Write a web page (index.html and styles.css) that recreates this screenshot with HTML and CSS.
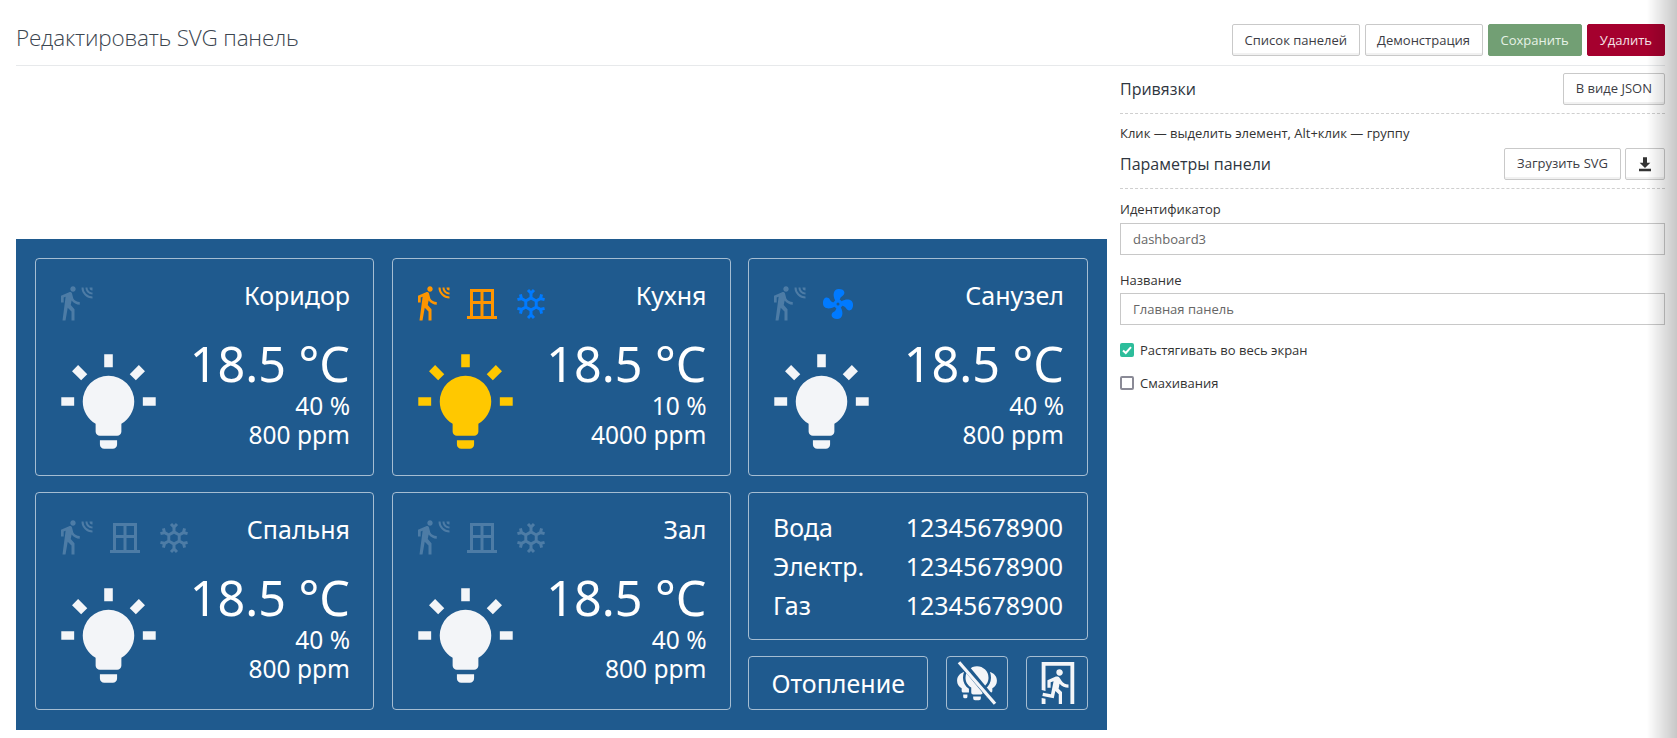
FILE: index.html
```html
<!DOCTYPE html>
<html lang="ru">
<head>
<meta charset="utf-8">
<title>Редактировать SVG панель</title>
<link rel="stylesheet" href="styles.css">
</head>
<body>
<svg class="sprites" width="0" height="0" aria-hidden="true">
  <defs>
    <symbol id="i-motion" viewBox="0 0 24 24"><path d="M10,0.2C9,0.2 8.2,1 8.2,2C8.2,3 9,3.8 10,3.8C11,3.8 11.8,3 11.8,2C11.8,1 11,0.2 10,0.2M15.67,1A7.33,7.33 0 0,0 23,8.33V7A6,6 0 0,1 17,1H15.67M18.33,1C18.33,3.58 20.42,5.67 23,5.67V4.33C21.16,4.33 19.67,2.84 19.67,1H18.33M21,1A2,2 0 0,0 23,3V1H21M7.92,4.03C7.75,4.03 7.58,4.07 7.42,4.15L2,6.46V11H3.8V7.68L5.08,7.16L3,23H5L6.5,14.5L9,17V23H11V15.5L8.5,12.7L9.08,9.7C10.37,11.3 12.3,12.5 14.5,12.5V10.7C12.6,10.7 11.06,9.7 10.2,8.3L9.3,4.9C9.12,4.37 8.5,4.03 7.92,4.03Z"/></symbol>
    <symbol id="i-window" viewBox="0 0 24 24"><path fill-rule="evenodd" d="M4,2H20V20H22V22H2V20H4V2M6,4V10H11V4H6M13,4V10H18V4H13M6,12V20H11V12H6M13,12V20H18V12H13Z"/></symbol>
    <symbol id="i-snow" viewBox="0 0 24 24"><path d="M20.79,13.95L18.46,14.57L16.46,13.44V10.56L18.46,9.43L20.79,10.05L21.31,8.12L19.54,7.65L20,5.88L18.07,5.36L17.45,7.69L15.45,8.82L13,7.38V5.12L14.71,3.41L13.29,2L12,3.29L10.71,2L9.29,3.41L11,5.12V7.38L8.5,8.82L6.5,7.69L5.92,5.36L4,5.88L4.47,7.65L2.7,8.12L3.22,10.05L5.55,9.43L7.55,10.56V13.45L5.55,14.58L3.22,13.96L2.7,15.89L4.47,16.36L4,18.12L5.93,18.64L6.55,16.31L8.55,15.18L11,16.62V18.88L9.29,20.59L10.71,22L12,20.71L13.29,22L14.7,20.59L13,18.88V16.62L15.5,15.17L17.5,16.3L18.12,18.63L20,18.12L19.53,16.35L21.3,15.88L20.79,13.95M9.5,10.56L12,9.11L14.5,10.56V13.44L12,14.89L9.5,13.44V10.56Z"/></symbol>
    <symbol id="i-fan" viewBox="0 0 24 24"><path d="M12,11A1,1 0 0,0 11,12A1,1 0 0,0 12,13A1,1 0 0,0 13,12A1,1 0 0,0 12,11M12.5,2C17,2 17.11,5.57 14.75,6.75C13.76,7.24 13.32,8.29 13.13,9.22C13.61,9.42 14.03,9.73 14.35,10.13C18.05,8.13 22.03,8.92 22.03,12.5C22.03,17 18.46,17.1 17.28,14.73C16.78,13.74 15.72,13.3 14.79,13.11C14.59,13.59 14.28,14 13.88,14.34C15.87,18.03 15.08,22 11.5,22C7,22 6.91,18.42 9.27,17.24C10.25,16.75 10.69,15.71 10.89,14.79C10.4,14.59 9.97,14.27 9.65,13.87C5.96,15.85 2,15.07 2,11.5C2,7 5.56,6.89 6.74,9.26C7.24,10.25 8.29,10.68 9.22,10.87C9.41,10.39 9.73,9.97 10.14,9.65C8.15,5.96 8.94,2 12.5,2Z"/></symbol>
    <symbol id="i-bulb" viewBox="0 0 24 24"><path d="M12,6A6,6 0 0,1 18,12C18,14.22 16.79,16.16 15,17.2V19A1,1 0 0,1 14,20H10A1,1 0 0,1 9,19V17.2C7.21,16.16 6,14.22 6,12A6,6 0 0,1 12,6M14,21V22A1,1 0 0,1 13,23H11A1,1 0 0,1 10,22V21H14M20,11H23V13H20V11M1,11H4V13H1V11M13,1V4H11V1H13M4.92,3.5L7.05,5.64L5.63,7.05L3.5,4.93L4.92,3.5M16.95,5.63L19.07,3.5L20.5,4.93L18.37,7.05L16.95,5.63Z"/></symbol>
    <symbol id="i-exit" viewBox="0 0 24 24"><path d="M13.34,8.17C12.41,8.17 11.65,7.4 11.65,6.47A1.69,1.69 0 0,1 13.34,4.78C14.28,4.78 15.04,5.54 15.04,6.47C15.04,7.4 14.28,8.17 13.34,8.17M10.3,19.93L4.37,18.75L4.71,17.05L8.86,17.9L10.21,11.04L8.69,11.64V14.5H7V10.54L11.4,8.67L12.07,8.61C12.67,8.61 13.17,8.95 13.5,9.46L14.36,10.81C15.04,12 16.39,12.82 18,12.82V14.5C16.14,14.5 14.44,13.67 13.34,12.42L12.84,14.96L14.61,16.65V23H12.92V17.92L11.14,16.23L10.3,19.93M21,23H19V3H6V16.11L4,15.69V1H21V23M6,23H4V19.82L6,20.24V23Z"/></symbol>
    <symbol id="i-group-off" viewBox="0 0 24 24">
      <path d="M12,3.2A6,6 0 0,1 18,9.2C18,11.4 16.8,13.2 15,14.3V17A1,1 0 0,1 14,18H10A1,1 0 0,1 9,17V14.3C7.2,13.2 6,11.4 6,9.2A6,6 0 0,1 12,3.2M14,19V20A1,1 0 0,1 13,21H11A1,1 0 0,1 10,20V19H14Z"/>
      <path d="M5.2,6.2C4,6.6 1.6,7.8 1.6,10.8C1.6,12.6 2.6,13.9 4,14.7V16.2A0.8,0.8 0 0,0 4.8,17H7.8V15C5.8,13.6 4.7,11.6 4.7,9.2C4.7,8.2 4.9,7.2 5.2,6.2M4.8,18H7V19.2A0.8,0.8 0 0,1 6.2,20H5.6A0.8,0.8 0 0,1 4.8,19.2V18Z"/>
      <path d="M18.8,6.2C20,6.6 22.4,7.8 22.4,10.8C22.4,12.6 21.4,13.9 20,14.7V16.2A0.8,0.8 0 0,1 19.2,17H16.2V15C18.2,13.6 19.3,11.6 19.3,9.2C19.3,8.2 19.1,7.2 18.8,6.2M19.2,18H17V19.2A0.8,0.8 0 0,0 17.8,20H18.4A0.8,0.8 0 0,0 19.2,19.2V18Z"/>
      <path class="slash-gap" d="M3.5,0.6L21.5,22.4"/>
      <path class="slash" d="M2.6,1.2L21.4,22.8"/>
    </symbol>
    <symbol id="i-download" viewBox="0 0 24 24"><path d="M3,19H21V23H3V19M9,2H15V10H20L12,18L4,10H9V2Z"/></symbol>
  </defs>
</svg>
<div class="page">
  <header class="topbar">
    <h1 class="title">Редактировать SVG панель</h1>
    <div class="actions">
      <button class="btn">Список панелей</button>
      <button class="btn">Демонстрация</button>
      <button class="btn btn-save">Сохранить</button>
      <button class="btn btn-delete">Удалить</button>
    </div>
  </header>
  <div class="content">
    <main class="dashboard">
      <section class="card">
        <div class="card-left">
          <div class="icons">
            <svg class="ic dim"><use href="#i-motion"/></svg>
          </div>
          <svg class="bulb"><use href="#i-bulb"/></svg>
        </div>
        <div class="card-right">
          <div class="room">Коридор</div>
          <div class="temp">18.5 °C</div>
          <div class="val">40 %</div>
          <div class="val">800 ppm</div>
        </div>
      </section>
      <section class="card">
        <div class="card-left">
          <div class="icons">
            <svg class="ic orange"><use href="#i-motion"/></svg>
            <svg class="ic orange"><use href="#i-window"/></svg>
            <svg class="ic blue"><use href="#i-snow"/></svg>
          </div>
          <svg class="bulb yellow"><use href="#i-bulb"/></svg>
        </div>
        <div class="card-right">
          <div class="room">Кухня</div>
          <div class="temp">18.5 °C</div>
          <div class="val">10 %</div>
          <div class="val">4000 ppm</div>
        </div>
      </section>
      <section class="card">
        <div class="card-left">
          <div class="icons">
            <svg class="ic dim"><use href="#i-motion"/></svg>
            <svg class="ic blue"><use href="#i-fan"/></svg>
          </div>
          <svg class="bulb"><use href="#i-bulb"/></svg>
        </div>
        <div class="card-right">
          <div class="room">Санузел</div>
          <div class="temp">18.5 °C</div>
          <div class="val">40 %</div>
          <div class="val">800 ppm</div>
        </div>
      </section>
      <section class="card">
        <div class="card-left">
          <div class="icons">
            <svg class="ic dim"><use href="#i-motion"/></svg>
            <svg class="ic dim"><use href="#i-window"/></svg>
            <svg class="ic dim"><use href="#i-snow"/></svg>
          </div>
          <svg class="bulb"><use href="#i-bulb"/></svg>
        </div>
        <div class="card-right">
          <div class="room">Спальня</div>
          <div class="temp">18.5 °C</div>
          <div class="val">40 %</div>
          <div class="val">800 ppm</div>
        </div>
      </section>
      <section class="card">
        <div class="card-left">
          <div class="icons">
            <svg class="ic dim"><use href="#i-motion"/></svg>
            <svg class="ic dim"><use href="#i-window"/></svg>
            <svg class="ic dim"><use href="#i-snow"/></svg>
          </div>
          <svg class="bulb"><use href="#i-bulb"/></svg>
        </div>
        <div class="card-right">
          <div class="room">Зал</div>
          <div class="temp">18.5 °C</div>
          <div class="val">40 %</div>
          <div class="val">800 ppm</div>
        </div>
      </section>
      <div class="stack">
        <section class="meters">
          <span>Вода</span><span class="num">12345678900</span>
          <span>Электр.</span><span class="num">12345678900</span>
          <span>Газ</span><span class="num">12345678900</span>
        </section>
        <div class="tiles">
          <div class="tile tile-wide">Отопление</div>
          <div class="tile tile-icon"><svg class="tile-svg"><use href="#i-group-off"/></svg></div>
          <div class="tile tile-icon"><svg class="tile-svg"><use href="#i-exit"/></svg></div>
        </div>
      </div>
    </main>
    <aside class="side">
      <div class="side-head side-head-first">
        <span class="side-title">Привязки</span>
        <div class="side-btns"><button class="btn">В виде JSON</button></div>
      </div>
      <p class="hint">Клик — выделить элемент, Alt+клик — группу</p>
      <div class="side-head">
        <span class="side-title">Параметры панели</span>
        <div class="side-btns">
          <button class="btn">Загрузить SVG</button>
          <button class="btn btn-icon"><svg class="dl"><use href="#i-download"/></svg></button>
        </div>
      </div>
      <label class="field-label field-first">Идентификатор</label>
      <div class="input">dashboard3</div>
      <label class="field-label">Название</label>
      <div class="input">Главная панель</div>
      <div class="check check-first"><span class="box box-on"><svg viewBox="0 0 14 14" class="tick"><path d="M3,7.4L5.8,10L11,4.2"/></svg></span>Растягивать во весь экран</div>
      <div class="check"><span class="box"></span>Смахивания</div>
    </aside>
  </div>
</div>
<div class="edge-shadow"></div>
</body>
</html>
```
FILE: styles.css
```css
* { box-sizing: border-box; }
html, body { margin: 0; height: 100%; overflow: hidden; background: #fff; }
body { font-family: "Open Sans", "Liberation Sans", sans-serif; color: #333; }
.sprites { position: absolute; }
.slash-gap { stroke: #1f5a8e; stroke-width: 3.4; fill: none; }
.slash { stroke: #f3f5f8; stroke-width: 1.7; fill: none; }

.page { padding: 0 12px 0 16px; }
.topbar { height: 66px; display: flex; justify-content: space-between; align-items: flex-start; border-bottom: 1px solid #e7e9eb; padding-top: 24px; }
.title { margin: 0; font-size: 22.5px; line-height: 28px; font-weight: 300; color: #3c4650; letter-spacing: -0.2px; }
.actions { display: flex; gap: 5px; }
.btn { height: 32px; padding: 0 12px; font: 400 13px/1 "Open Sans", sans-serif; color: #3c3c44; background: #fff; border: 1px solid #c9c9c9; border-radius: 2px; box-shadow: inset 0 -2px 0 #f1f1f1; white-space: nowrap; }
.actions .btn { padding: 0 11.5px; }
.actions .btn-save { background: #729f74; border-color: #729f74; color: #e6f2e6; box-shadow: none; padding: 0 12px; }
.actions .btn-delete { background: #a5002e; border-color: #a5002e; color: #f5e3e8; box-shadow: none; padding: 0 12px; }
.btn-icon { padding: 0; width: 40px; display: flex; align-items: center; justify-content: center; }
.dl { width: 16px; height: 16px; fill: #333; }

.content { display: flex; align-items: flex-start; }

.dashboard { width: 1091px; height: 491px; margin-top: 173px; padding: 19px 0 0 19px; background: #1f5a8e; display: grid; grid-template-columns: 339px 339px 340px; column-gap: 17.5px; grid-template-rows: 218px 218px; row-gap: 16px; color: #fff; font-family: "Noto Sans", "Open Sans", sans-serif; }
.card { display: flex; justify-content: space-between; padding: 27px 23px 0 22px; border: 1px solid rgba(255,255,255,.6); border-radius: 4px; }
.card-left { display: flex; flex-direction: column; width: 100px; flex: none; }
.icons { display: flex; gap: 13px; height: 36px; }
.ic { width: 36px; height: 36px; flex: none; }
.dim { fill: #4d7ca6; }
.orange { fill: #ff9500; }
.blue { fill: #007aff; }
.bulb { width: 103px; height: 103px; margin: 28px 0 0 -1px; fill: #f3f5f8; flex: none; }
.bulb.yellow { fill: #ffc800; }
.card-right { text-align: right; white-space: nowrap; }
.room { font-size: 25px; line-height: 22px; margin-top: -2px; }
.temp { font-size: 48.5px; line-height: 56px; margin-top: 29px; }
.val { font-size: 24.5px; line-height: 29px; }

.stack { display: flex; flex-direction: column; gap: 16px; }
.meters { height: 149px; display: grid; grid-template-columns: 1fr auto; align-content: center; row-gap: 7px; padding: 0 24px; border: 1px solid rgba(255,255,255,.6); border-radius: 4px; font-size: 25px; line-height: 32px; }
.tiles { display: flex; gap: 18px; height: 55px; }
.tile { border: 1px solid rgba(255,255,255,.6); border-radius: 4px; display: flex; align-items: center; justify-content: center; }
.tile-wide { width: 181px; font-size: 25px; }
.tile-icon { width: 62px; }
.tile-svg { width: 46px; height: 46px; fill: #f3f5f8; }

.side { width: 545px; margin-left: 13px; font-size: 13px; }
.side-head { display: flex; justify-content: space-between; align-items: center; height: 41px; padding-bottom: 9px; border-bottom: 1px dashed #cfcfcf; }
.side-head-first { margin-top: 7px; height: 41px; }
.side-title { font-size: 16px; color: #2f3640; }
.side-btns { display: flex; gap: 4px; }
.hint { margin: 0; height: 34px; line-height: 38px; font-size: 13px; color: #333; }
.field-label { display: block; font-size: 13px; line-height: 18px; color: #333; margin-top: 16px; margin-bottom: 4px; }
.field-label.field-first { margin-top: 11px; margin-bottom: 5px; }
.input { height: 32px; line-height: 30px; padding: 0 12px; border: 1px solid #c8c8c8; font-size: 13px; color: #666; }
.check { display: flex; align-items: center; gap: 6px; font-size: 13px; color: #333; height: 18px; margin-top: 15px; }
.check-first { margin-top: 16px; }
.box { width: 14px; height: 14px; border: 2px solid #8a8a96; border-radius: 2px; flex: none; display: block; }
.box-on { background: #2dbd9b; border-color: #2dbd9b; position: relative; }
.tick { position: absolute; left: -2px; top: -2px; width: 14px; height: 14px; fill: none; stroke: #fff; stroke-width: 2; }

.edge-shadow { position: fixed; top: 0; right: 0; bottom: 0; width: 30px; background: linear-gradient(to right, rgba(0,0,0,0), rgba(0,0,0,.22)); pointer-events: none; }
```
